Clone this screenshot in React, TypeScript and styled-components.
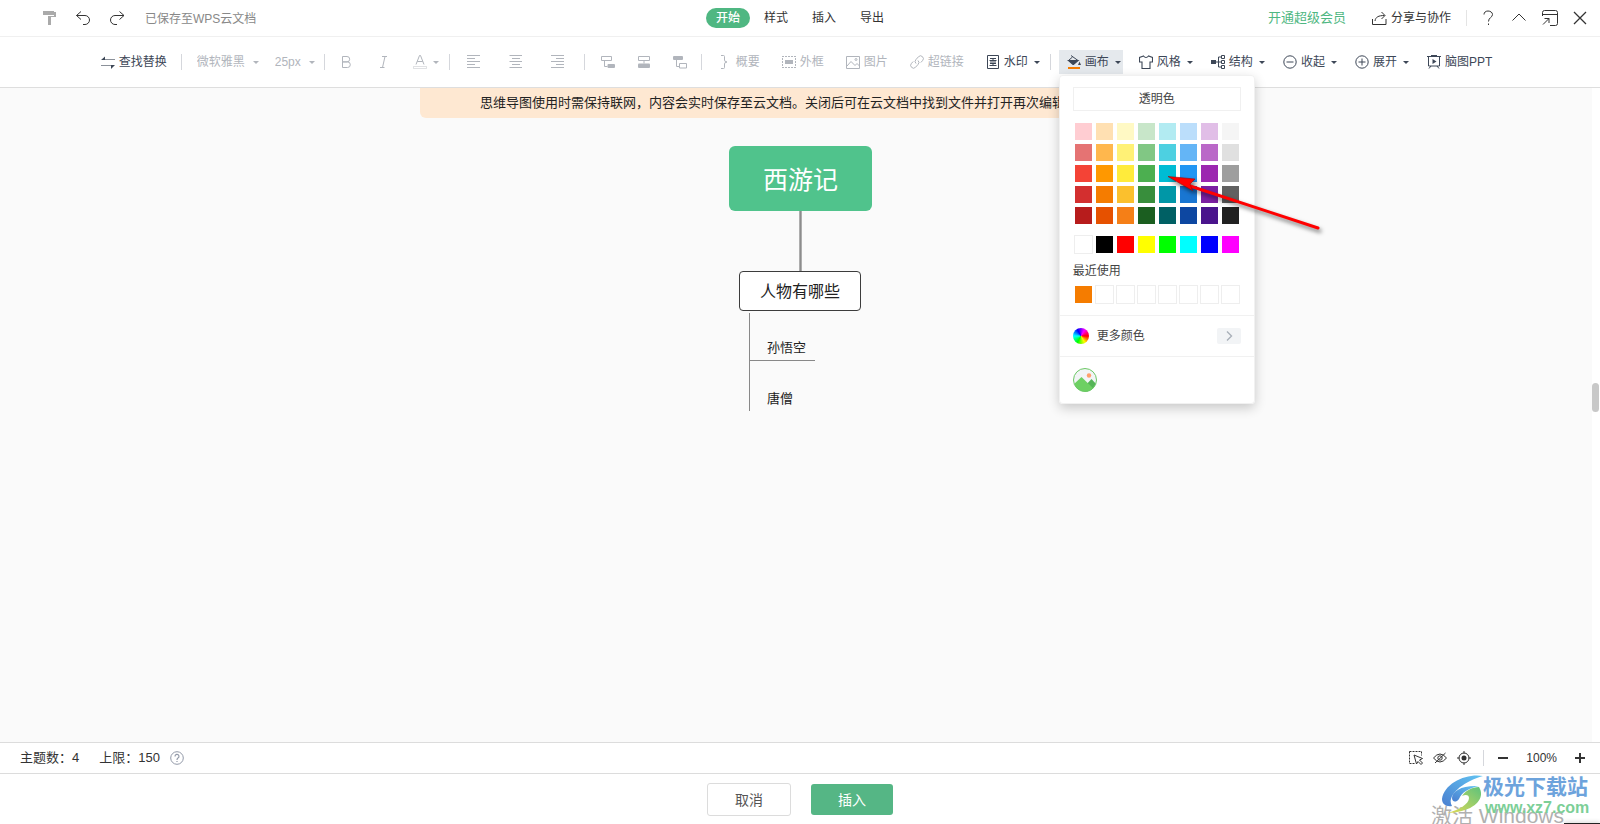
import React from "react";
import styled, { createGlobalStyle } from "styled-components";

const GlobalStyle = createGlobalStyle`
  *, *::before, *::after { box-sizing: border-box; }
  body {
    margin: 0;
    background: #fff;
    color: #333;
    font-family: "Liberation Sans", "Noto Sans CJK SC", sans-serif;
    font-size: 12px;
    line-height: 16px;
  }
  button, select { font: inherit; color: inherit; }
  svg { display: block; flex: none; }
`;

const Page = styled.div`
  position: relative;
  display: flex;
  flex-direction: column;
  min-height: 100vh;
  overflow: hidden;
`;

/* ---------- title bar ---------- */

const TitleBar = styled.header`
  display: grid;
  grid-template-columns: 1fr auto 1fr;
  align-items: center;
  height: 37px;
  border-bottom: 1px solid #f0f0f0;
  white-space: nowrap;
`;

const TitleStart = styled.div`
  display: flex;
  align-items: center;
  gap: 18px;
  padding-left: 41px;
`;

const TitleEnd = styled.div`
  display: flex;
  align-items: center;
  justify-content: flex-end;
  padding-right: 13px;
`;

const SavedNote = styled.span`
  padding: 2px 0 0 2px;
  color: #888;
`;

const PlainButton = styled.button`
  display: flex;
  align-items: center;
  gap: 4px;
  padding: 0;
  border: 0;
  background: none;
  white-space: nowrap;
  color: #333;
`;

const Tabs = styled.nav`
  display: flex;
  gap: 4px;
`;

const Tab = styled.button<{ $active?: boolean }>`
  width: 44px;
  height: 20px;
  padding: 0;
  border: 0;
  border-radius: 10px;
  background: ${(p) => (p.$active ? "#4fb782" : "transparent")};
  color: ${(p) => (p.$active ? "#fff" : "#333")};
  font-weight: ${(p) => (p.$active ? 500 : 400)};
`;

const VipLink = styled.a`
  margin-right: 26px;
  color: #4fb782;
  font-size: 13px;
  text-decoration: none;
`;

const TitleDivider = styled.span`
  width: 1px;
  height: 16px;
  margin: 0 13px 0 15px;
  background: #e4e4e4;
`;

const WindowButtons = styled.div`
  display: flex;
  align-items: center;
  gap: 15px;
`;

/* ---------- toolbar ---------- */

const Toolbar = styled.div`
  position: relative;
  z-index: 2;
  display: flex;
  align-items: center;
  justify-content: center;
  gap: 8px;
  height: 51px;
  padding-right: 9px;
  border-bottom: 1px solid #dedede;
  background: #fff;
  white-space: nowrap;
`;

const Divider = styled.span`
  flex: none;
  width: 1px;
  height: 16px;
  background: #d5d7dc;
`;

const Tool = styled.button<{ $menu?: boolean; $active?: boolean; $wide?: boolean }>`
  display: flex;
  flex: none;
  align-items: center;
  gap: 4px;
  height: 24px;
  padding: ${(p) => (p.$wide ? "0 11px 0 9px" : p.$menu ? "0 2px 0 8px" : "0 6px 0 8px")};
  border: 0;
  background: ${(p) => (p.$active ? "#e5e9ed" : "transparent")};
  color: #3d4757;

  &:disabled { color: #b1b5bc; }
`;

const Caret = styled.span`
  width: 0;
  height: 0;
  margin-left: 2px;
  border: 3px solid transparent;
  border-top-color: currentColor;
  border-bottom: 0;
`;

const Picker = styled.label`
  display: flex;
  flex: none;
  align-items: center;
  gap: 5px;
  padding: 0 1px 0 7px;
  color: #b1b5bc;
`;

const PickerSelect = styled.select`
  appearance: none;
  padding: 0;
  border: 0;
  background: none;

  &:disabled { opacity: 1; color: #b1b5bc; }
`;

const MenuAnchor = styled.div`
  position: relative;
`;

/* ---------- colour panel ---------- */

const Panel = styled.section`
  position: absolute;
  top: 25px;
  left: 0;
  width: 196px;
  border-radius: 4px;
  background: #fff;
  box-shadow: inset 0 0 0 1px #f1f1f1, 0 4px 12px rgba(0, 0, 0, 0.2);
  color: #444;
`;

const PanelColors = styled.div`
  display: flex;
  flex-direction: column;
  padding: 12px 14px 11px;
`;

const Transparent = styled.button`
  height: 24px;
  margin-bottom: 11px;
  padding: 0;
  border: 1px solid #f0f0f0;
  background: #fff;
  color: #444;
`;

const Swatches = styled.div`
  display: grid;
  grid-template-columns: repeat(8, 19px);
  gap: 2px;
  padding-left: 1px;
`;

const Swatch = styled.button<{ $fill?: string }>`
  height: 19px;
  padding: 0;
  border: 1px solid ${(p) => (p.$fill ? "transparent" : "#eee")};
  background: ${(p) => p.$fill ?? "#fff"};
  background-clip: padding-box;
`;

const BasicRow = styled.div`
  margin-top: 10px;
`;

const RecentTitle = styled.h2`
  margin: 9px 0 6px;
  font-size: 12px;
  font-weight: 400;
  line-height: 16px;
`;

const MoreColors = styled.button`
  display: flex;
  align-items: center;
  gap: 8px;
  width: 100%;
  height: 42px;
  padding: 0 14px;
  border: 1px solid #f1f1f1;
  border-width: 1px 0;
  background: none;
  color: #444;
`;

const Wheel = styled.span`
  width: 16px;
  height: 16px;
  border-radius: 50%;
  background: conic-gradient(from 90deg, #f00, #ff0, #0f0, #0ff, #00f, #f0f, #f00);
`;

const NextBox = styled.span`
  display: grid;
  place-items: center;
  width: 24px;
  height: 16px;
  margin-left: auto;
  border-radius: 2px;
  background: #f2f4f6;
  color: #a9b0b9;
`;

const PictureButton = styled.button`
  display: block;
  padding: 11px 14px 12px;
  border: 0;
  background: none;
`;

const Pointer = styled.svg`
  position: absolute;
  top: 120px;
  left: 100px;
  pointer-events: none;
  overflow: visible;
  filter: drop-shadow(2px 3px 2px rgba(0, 0, 0, 0.55));
`;

/* ---------- canvas ---------- */

const Workspace = styled.main`
  display: flex;
  flex: 1;
  min-height: 420px;
`;

const Canvas = styled.div`
  position: relative;
  flex: 1;
  margin-right: -9px;
  border-right: 9px solid #fff;
  background: #fafafa;
`;

const Scrollbar = styled.div`
  position: relative;
  display: flex;
  flex-direction: column;
  justify-content: center;
  width: 8px;
  padding: 0 1px 35px 0;
`;

const Thumb = styled.span`
  height: 29px;
  border-radius: 4px;
  background: #c8c8c8;
`;

const BannerRow = styled.div`
  display: flex;
  justify-content: center;
  padding-left: 8px;
`;

const Banner = styled.p`
  width: 760px;
  margin: 0;
  padding: 7px 0 7px 60px;
  border-radius: 0 0 6px 6px;
  background: #fee8d2;
  color: #222;
  font-size: 13px;
  line-height: 16px;
  white-space: nowrap;
`;

const MindMap = styled.div`
  position: absolute;
  top: 58px;
  left: calc(50% - 67px);
  width: 143px;
`;

const Links = styled.svg`
  position: absolute;
  top: 0;
  left: 0;
`;

const RootNode = styled.div`
  position: absolute;
  top: 0;
  left: 0;
  display: grid;
  place-items: center;
  width: 143px;
  height: 65px;
  padding-top: 2px;
  border-radius: 6px;
  background: #50c38c;
  color: #fff;
  font-size: 25px;
  line-height: 30px;
`;

const TopicNode = styled.div`
  position: absolute;
  top: 125px;
  left: 10px;
  display: grid;
  place-items: center;
  width: 122px;
  height: 40px;
  padding-top: 2px;
  border: 1px solid #3c3c3c;
  border-radius: 4px;
  background: #fff;
  color: #222;
  font-size: 16px;
  line-height: 24px;
`;

const LeafNode = styled.div<{ $top: number }>`
  position: absolute;
  top: ${(p) => p.$top}px;
  left: 38px;
  color: #222;
  font-size: 13px;
  line-height: 16px;
`;

/* ---------- bottom bars ---------- */

const StatusBar = styled.div`
  display: flex;
  align-items: center;
  height: 32px;
  padding: 0 13px 0 20px;
  border: 1px solid #dcdcdc;
  border-width: 1px 0;
  background: #fff;
  color: #333;
  font-size: 13px;
  white-space: nowrap;
`;

const Count = styled.span`
  margin-right: 20px;
`;

const Limit = styled.span`
  margin-right: 10px;
`;

const ViewTools = styled.div`
  display: flex;
  align-items: center;
  gap: 10px;
  margin-left: auto;
`;

const ZoomTools = styled.div`
  display: flex;
  align-items: center;
  gap: 16px;
  margin-left: 12px;
  padding-left: 12px;
  border-left: 1px solid #d5d7dc;
  font-size: 12px;
`;

const Footer = styled.footer`
  display: flex;
  align-items: center;
  justify-content: center;
  gap: 20px;
  height: 50px;
  background: #fff;
`;

const Cancel = styled.button`
  width: 84px;
  height: 33px;
  padding-top: 2px;
  border: 1px solid #dcdcdc;
  border-radius: 3px;
  background: #fff;
  color: #555;
  font-size: 14px;
`;

const Insert = styled.button`
  width: 82px;
  height: 31px;
  padding-top: 2px;
  border: 0;
  border-radius: 3px;
  background: #55b685;
  color: #fff;
  font-size: 14px;
`;

const Watermark = styled.div`
  position: absolute;
  right: 0;
  bottom: 0;
  width: 170px;
  height: 50px;
  overflow: hidden;
  pointer-events: none;
  white-space: nowrap;
`;

const Activate = styled.span`
  position: absolute;
  top: 30px;
  left: 1px;
  color: #b0b0b0;
  font-size: 21px;
  line-height: 24px;
`;

const SiteName = styled.span`
  position: absolute;
  top: 0;
  left: 53px;
  color: #6da3dc;
  font-size: 21px;
  font-weight: 700;
  line-height: 26px;
`;

const SiteUrl = styled.span`
  position: absolute;
  top: 25px;
  left: 55px;
  color: #7ccf97;
  font-size: 16px;
  font-weight: 700;
  line-height: 18px;
`;

const SiteLogo = styled.svg`
  position: absolute;
  top: 0;
  left: 11px;
`;

const EdgeWindow = styled.span`
  position: absolute;
  right: 0;
  bottom: 0;
  width: 36px;
  height: 1px;
  background: #222;
  box-shadow: 0 0 4px rgba(0, 0, 0, 0.5);
`;

/* ---------- icons ---------- */

type IconProps = { size?: number; children: React.ReactNode };

const Icon = ({ size = 14, children }: IconProps) => (
  <svg width={size} height={size} viewBox={`0 0 ${size} ${size}`} fill="none" stroke="currentColor" aria-hidden="true">
    {children}
  </svg>
);

const PaintIcon = () => (
  <Icon size={16}>
    <g fill="#aaa" stroke="none">
      <path d="M2 1h11v4H2z" />
      <path d="M13 2h2v5h-5v1H8V6h5z" />
      <path d="M7 6h3v9H7z" />
    </g>
  </Icon>
);
const UndoIcon = () => (
  <Icon size={16}><path d="M6 1.5 1.5 5.500 6 9.500M1.500 5.500h8.500a4.500 4.500 0 0 1 0 9H8" /></Icon>
);
const RedoIcon = () => (
  <Icon size={16}><path d="M10.500 1.500 15 5.500 10.500 9.500M15 5.500H6a4.500 4.500 0 0 0 0 9h2" /></Icon>
);
const ShareIcon = () => (
  <Icon size={15}><path d="M.5 8v5.500h13.500V8M3 10C3.500 6 6.500 4.500 12.500 4.500M9.500 1l3.500 3.500L9.500 8" /></Icon>
);
const HelpIcon = () => (
  <Icon size={16}><path d="M4 4.500C4 2.500 5.500 1 8 1s4.500 1.500 4.500 3.500c0 3-4 3-4 7M8.500 13.500v1.500" /></Icon>
);
const CollapseIcon = () => (
  <Icon size={16}><path d="m1.500 10.500 6.500-6.500 6.500 6.500" /></Icon>
);
const WindowIcon = () => (
  <Icon size={16}><path d="M.5 6V2.500a2 2 0 0 1 2-2h11a2 2 0 0 1 2 2v11a2 2 0 0 1-2 2H8M.5 4.500h15M1 14.500l6-6M2.500 8.500h4.500v4.500" /></Icon>
);
const CloseIcon = () => (
  <Icon size={14}><path d="m1 1 12 12M13 1 1 13" strokeWidth="1.3" /></Icon>
);
const SwapIcon = () => (
  <Icon>
    <path d="M1 4.500h13M0 10.500h13" strokeOpacity=".6" />
    <path d="M0 4.900 4 1.500v3.400zM14 10.100 10 14v-3.900z" fill="currentColor" stroke="none" />
  </Icon>
);
const BoldIcon = () => (
  <Icon><path d="M1.500 1.500h4.500a2.700 2.700 0 0 1 0 5.400H1.500zM1.500 6.900h5a2.800 2.800 0 0 1 0 5.600h-5z" /></Icon>
);
const ItalicIcon = () => (
  <Icon><path d="M5 1.500h5M3 12.500h4.500M8 1.500 5.500 12.500" /></Icon>
);
const FontColorIcon = () => (
  <Icon>
    <path d="M3 9.500 6.500.5h1L11 9.500M4.200 6.500h5.600" />
    <path d="M.5 11.500h13v2H.5z" strokeOpacity=".4" />
  </Icon>
);
const AlignIcon = ({ kind }: { kind: "left" | "center" | "right" }) => {
  const d = {
    left: "M0 .5h13M0 3.500h8M0 6.500h13M0 9.500h8M0 12.500h13",
    center: "M.5 .5h12.500M3 3.500h8M.5 6.500h12.500M3 9.500h8M.5 12.500h12.500",
    right: "M0 .5h13M5 3.500h8M0 6.500h13M5 9.500h8M0 12.500h13",
  }[kind];
  return <Icon><path d={d} /></Icon>;
};
const ChildIcon = () => (
  <Icon><path d="M.5 1.500h10v4H.5zM3.500 5.500v6h3" /><rect x="6.500" y="9" width="7.500" height="4" rx="1" fill="currentColor" stroke="none" /></Icon>
);
const SiblingIcon = () => (
  <Icon><path d="M1.500 1.500h11v4h-11zM7 5.500v3" /><rect x="1" y="8.500" width="12" height="4.500" rx="1" fill="currentColor" stroke="none" /></Icon>
);
const ParentIcon = () => (
  <Icon><path d="M3.500 5v6.500h3M6.500 8.500h7v4.500h-7z" /><rect x="0" y="1" width="10" height="4" rx="1" fill="currentColor" stroke="none" /></Icon>
);
const BraceIcon = () => (
  <Icon><path d="M3 .5h2.500a1 1 0 0 1 1 1v3.500q0 2 2.500 2-2.500 0-2.500 2v3.500a1 1 0 0 1-1 1H3" /></Icon>
);
const FrameIcon = () => (
  <Icon>
    <path d="M0 1.500h14M0 12.500h14" strokeDasharray="2 1" />
    <path d="M.5 3v8M13.500 3v8" strokeDasharray="2 1" />
    <path d="M3 5h8v4H3z" fill="currentColor" stroke="none" />
  </Icon>
);
const ImageIcon = () => (
  <Icon><path d="M.5 1.500h13v12H.5zM1 11l4-4.500 4 4 2-2 2.500 2.500" /><circle cx="10" cy="4.500" r="1" /></Icon>
);
const LinkIcon = () => (
  <Icon>
    <path d="M6 8.500a2.800 2.800 0 0 1 0-4L8.500 1.700a2.800 2.800 0 0 1 4 4L10.800 7.500M8 5.500a2.800 2.800 0 0 1 0 4l-2.500 2.800a2.800 2.800 0 0 1-4-4L3.200 6.500" />
  </Icon>
);
const WatermarkIcon = () => (
  <Icon><path d="M1.500.5h11v13h-11zM3.500 10.500h7M4 3.500h6M3.500 5.500h7M4 8.500h6M7 3v7M5 5.500v3M9 5.500v3" /></Icon>
);
const BucketIcon = () => (
  <Icon>
    <path d="M1.500 5.500h9.500L6.500 9.500H6z" fill="currentColor" strokeWidth="1.2" />
    <path d="M5.500 2 1.500 5.500M4 .5l7 5" />
    <path d="M12.500 6.500 14 10h-3z" fill="currentColor" stroke="none" />
    <path d="M1 13h12" stroke="#f57c00" strokeWidth="2" />
  </Icon>
);
const ShirtIcon = () => (
  <Icon><path d="M4.500 1 .5 2.500v4.500H3v6.500h8V7h2.500V2.500L9.500 1Q7 4 4.500 1z" strokeWidth="1.1" /></Icon>
);
const StructureIcon = () => (
  <Icon>
    <path d="M0 5h5v4H0z" fill="currentColor" stroke="none" />
    <path d="M5 7h6M10.500 2H7.500v10h3M10.500.5h3v3h-3zM10.500 5.500h3v3h-3zM10.500 10.500h3v3h-3z" />
  </Icon>
);
const MinusCircle = () => (
  <Icon><circle cx="7" cy="7" r="6.200" /><path d="M3.500 7h7" /></Icon>
);
const PlusCircle = () => (
  <Icon><circle cx="7" cy="7" r="6.200" /><path d="M3.500 7h7M7 3.500v7" /></Icon>
);
const SlidesIcon = () => (
  <Icon><path d="M0 1.500h14M1.500 1.500v9.500h11V1.500M4 .5h6M4 11l-2 2.500M10 11l2 2.500" /><path d="M5.500 4v5l4-2.500z" fill="currentColor" stroke="none" /></Icon>
);
const SelectAreaIcon = () => (
  <Icon><path d="M.5.5h12v4M.5.5v12h5" strokeDasharray="2 1" /><path d="m5 4 8.500 3.500L10.500 9l3 3-1.500 1.500-3-3L7.500 13z" /></Icon>
);
const EyeOffIcon = () => (
  <Icon><path d="M.5 7Q7-1 13.500 7 7 15 .5 7zM2 12 12.500 2" /><circle cx="7" cy="7" r="2.200" /></Icon>
);
const TargetIcon = () => (
  <Icon><circle cx="7" cy="7" r="5" /><circle cx="7" cy="7" r="2.500" fill="currentColor" stroke="none" /><path d="M7 0v2.500M7 11.500V14M0 7h2.500M11.500 7H14" /></Icon>
);
const QuestionCircle = () => (
  <Icon><g stroke="#9299a8"><circle cx="7" cy="7" r="6.300" /><path d="M5 5.500a2 2 0 1 1 3 1.600Q7 7.700 7 9M7 10v1" strokeWidth="1.2" /></g></Icon>
);
const PictureIcon = () => (
  <svg width="24" height="24" viewBox="0 0 24 24" aria-hidden="true">
    <clipPath id="disc"><circle cx="12" cy="12" r="11.500" /></clipPath>
    <circle cx="12" cy="12" r="11.500" fill="#f2f4f6" />
    <g clipPath="url(#disc)">
      <path d="m12 18 6.500-7L24 17v7H12z" fill="#55b558" />
      <path d="M0 17 8.500 9 23 23v1H0z" fill="#6dd063" />
    </g>
    <circle cx="16" cy="7.500" r="2.200" fill="#ff9f6b" />
    <circle cx="12" cy="12" r="11.500" fill="none" stroke="#6bc865" />
  </svg>
);

/* ---------- data ---------- */

const palette = [
  "#ffcdd2", "#ffe0b2", "#fff9c4", "#c8e6c9", "#b2ebf2", "#bbdefb", "#e1bee7", "#f5f5f5",
  "#e57373", "#ffb74d", "#fff176", "#81c784", "#4dd0e1", "#64b5f6", "#ba68c8", "#e0e0e0",
  "#f44336", "#ff9800", "#ffeb3b", "#4caf50", "#00bcd4", "#2196f3", "#9c27b0", "#9e9e9e",
  "#d32f2f", "#f57c00", "#fbc02d", "#388e3c", "#0097a7", "#1976d2", "#7b1fa2", "#616161",
  "#b71c1c", "#e65100", "#f57f17", "#1b5e20", "#006064", "#0d47a1", "#4a148c", "#212121",
];
const basics = [undefined, "#000", "#f00", "#ff0", "#0f0", "#0ff", "#00f", "#f0f"];
const recent = ["#f57c00", ...Array<undefined>(7).fill(undefined)];

const SwatchGrid = ({ colors, name }: { colors: (string | undefined)[]; name: string }) => (
  <Swatches>
    {colors.map((c, i) => (
      <Swatch key={i} $fill={c} aria-label={`${name} ${c ?? i + 1}`} />
    ))}
  </Swatches>
);

const ColorPanel = () => (
  <Panel aria-label="画布">
    <PanelColors>
      <Transparent>透明色</Transparent>
      <SwatchGrid colors={palette} name="颜色" />
      <BasicRow><SwatchGrid colors={basics} name="标准色" /></BasicRow>
      <RecentTitle>最近使用</RecentTitle>
      <SwatchGrid colors={recent} name="最近" />
    </PanelColors>
    <MoreColors>
      <Wheel />
      更多颜色
      <NextBox>
        <svg width="8" height="10" viewBox="0 0 8 10" fill="none" stroke="currentColor" strokeWidth="1.4"><path d="m2 .5 4.500 4.500L2 9.500" /></svg>
      </NextBox>
    </MoreColors>
    <PictureButton aria-label="图片背景"><PictureIcon /></PictureButton>
  </Panel>
);

export default function App() {
  return (
    <Page>
      <GlobalStyle />
      <TitleBar>
        <TitleStart>
          <PlainButton aria-label="格式刷"><PaintIcon /></PlainButton>
          <PlainButton aria-label="撤销"><UndoIcon /></PlainButton>
          <PlainButton aria-label="重做"><RedoIcon /></PlainButton>
          <SavedNote>已保存至WPS云文档</SavedNote>
        </TitleStart>
        <Tabs>
          <Tab $active>开始</Tab>
          <Tab>样式</Tab>
          <Tab>插入</Tab>
          <Tab>导出</Tab>
        </Tabs>
        <TitleEnd>
          <VipLink href="#vip">开通超级会员</VipLink>
          <PlainButton><ShareIcon />分享与协作</PlainButton>
          <TitleDivider />
          <WindowButtons>
            <PlainButton aria-label="帮助"><HelpIcon /></PlainButton>
            <PlainButton aria-label="收起功能区"><CollapseIcon /></PlainButton>
            <PlainButton aria-label="窗口"><WindowIcon /></PlainButton>
            <PlainButton aria-label="关闭"><CloseIcon /></PlainButton>
          </WindowButtons>
        </TitleEnd>
      </TitleBar>

      <Toolbar>
        <Tool><SwapIcon />查找替换</Tool>
        <Divider />
        <Picker>
          <PickerSelect aria-label="字体" disabled><option>微软雅黑</option></PickerSelect>
          <Caret />
        </Picker>
        <Picker>
          <PickerSelect aria-label="字号" disabled><option>25px</option></PickerSelect>
          <Caret />
        </Picker>
        <Divider />
        <Tool disabled aria-label="加粗"><BoldIcon /></Tool>
        <Tool disabled aria-label="斜体"><ItalicIcon /></Tool>
        <Tool disabled $menu aria-label="字体颜色"><FontColorIcon /><Caret /></Tool>
        <Divider />
        <Tool disabled $wide aria-label="左对齐"><AlignIcon kind="left" /></Tool>
        <Tool disabled $wide aria-label="居中"><AlignIcon kind="center" /></Tool>
        <Tool disabled $wide aria-label="右对齐"><AlignIcon kind="right" /></Tool>
        <Divider />
        <Tool disabled aria-label="子主题"><ChildIcon /></Tool>
        <Tool disabled aria-label="同级主题"><SiblingIcon /></Tool>
        <Tool disabled aria-label="父主题"><ParentIcon /></Tool>
        <Divider />
        <Tool disabled><BraceIcon />概要</Tool>
        <Tool disabled><FrameIcon />外框</Tool>
        <Tool disabled><ImageIcon />图片</Tool>
        <Tool disabled><LinkIcon />超链接</Tool>
        <Tool $menu><WatermarkIcon />水印<Caret /></Tool>
        <Divider />
        <MenuAnchor>
          <Tool $menu $active aria-expanded="true"><BucketIcon />画布<Caret /></Tool>
          <ColorPanel />
          <Pointer width="170" height="70" viewBox="0 0 170 70" aria-hidden="true">
            <path d="M28 15 159 58" stroke="#f00" strokeWidth="3" strokeLinecap="round" />
            <path d="M9 6.500 36 9l-5 5 2.500 6.500z" fill="#f00" stroke="#a00" strokeWidth=".6" />
          </Pointer>
        </MenuAnchor>
        <Tool $menu><ShirtIcon />风格<Caret /></Tool>
        <Tool $menu><StructureIcon />结构<Caret /></Tool>
        <Tool $menu><MinusCircle />收起<Caret /></Tool>
        <Tool $menu><PlusCircle />展开<Caret /></Tool>
        <Tool><SlidesIcon />脑图PPT</Tool>
      </Toolbar>

      <Workspace>
        <Canvas>
          <BannerRow>
            <Banner>思维导图使用时需保持联网，内容会实时保存至云文档。关闭后可在云文档中找到文件并打开再次编辑</Banner>
          </BannerRow>
          <MindMap>
            <Links width="143" height="270" viewBox="0 0 143 270" aria-hidden="true">
              <path d="M71.500 65v60" stroke="#8c8c8c" strokeWidth="2.400" />
              <path d="M20.500 167v98M20.500 214.500H86" fill="none" stroke="#888" />
            </Links>
            <RootNode>西游记</RootNode>
            <TopicNode>人物有哪些</TopicNode>
            <LeafNode $top={194}>孙悟空</LeafNode>
            <LeafNode $top={245}>唐僧</LeafNode>
          </MindMap>
        </Canvas>
        <Scrollbar><Thumb /></Scrollbar>
      </Workspace>

      <StatusBar>
        <Count>主题数：4</Count>
        <Limit>上限：150</Limit>
        <QuestionCircle />
        <ViewTools>
          <PlainButton aria-label="框选"><SelectAreaIcon /></PlainButton>
          <PlainButton aria-label="隐藏"><EyeOffIcon /></PlainButton>
          <PlainButton aria-label="定位"><TargetIcon /></PlainButton>
        </ViewTools>
        <ZoomTools>
          <PlainButton aria-label="缩小"><Icon><path d="M2 7h10" strokeWidth="2" /></Icon></PlainButton>
          100%
          <PlainButton aria-label="放大"><Icon><path d="M2 7h10M7 2v10" strokeWidth="2" /></Icon></PlainButton>
        </ZoomTools>
      </StatusBar>

      <Footer>
        <Cancel>取消</Cancel>
        <Insert>插入</Insert>
      </Footer>

      <Watermark>
        <Activate>激活 Windows</Activate>
        <SiteLogo width="44" height="42" viewBox="0 0 44 42" aria-hidden="true">
          <defs>
            <linearGradient id="blue" x1="0" y1="1" x2="1" y2="0"><stop stopColor="#4a7fd0" /><stop offset="1" stopColor="#62c4f2" /></linearGradient>
            <linearGradient id="green" x1="0" y1="1" x2="1" y2="0"><stop stopColor="#e3dc55" /><stop offset="1" stopColor="#5ec27c" /></linearGradient>
          </defs>
          <path d="M42 2C26-1 3 9 1 25c0 5 4 8 10 7-6-9 9-24 31-30z" fill="url(#blue)" />
          <path d="M11 24c0-7 10-13 27-12-10 2-17 6-20 13-3 4-7 3-7-1z" fill="url(#blue)" />
          <path d="M38 13c7 11-4 25-32 26 12-3 22-9 22-15 0-3-3-4-7-2 3-5 10-9 17-9z" fill="url(#green)" />
        </SiteLogo>
        <SiteName>极光下载站</SiteName>
        <SiteUrl>www.xz7.com</SiteUrl>
        <EdgeWindow />
      </Watermark>
    </Page>
  );
}
